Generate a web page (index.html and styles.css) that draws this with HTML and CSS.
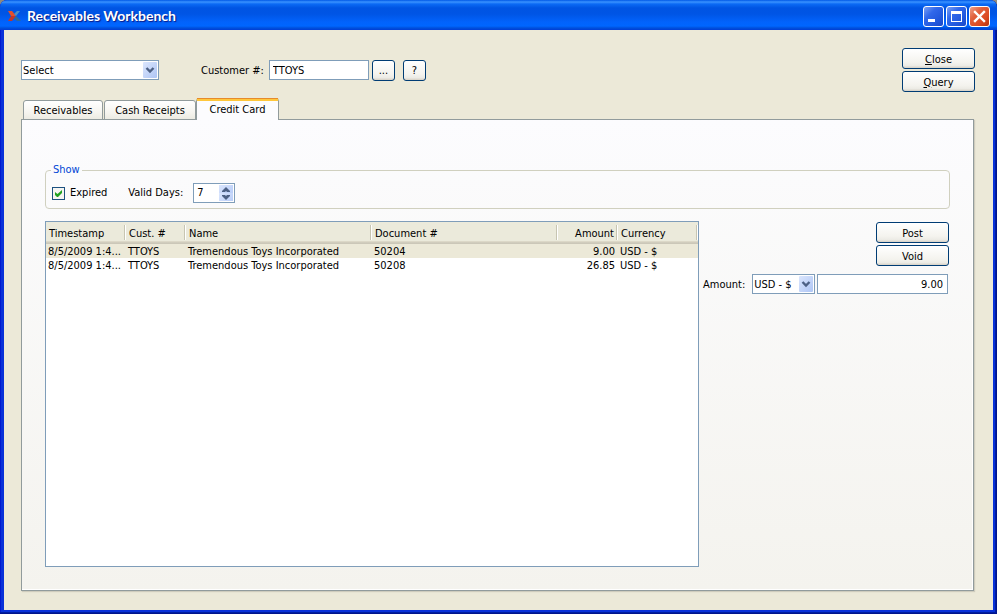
FILE: index.html
```
<!DOCTYPE html>
<html lang="en">
<head>
    <meta charset="UTF-8">
    <meta name="viewport" content="width=device-width, initial-scale=1.0">
    <title>Receivables Workbench</title>
    <link rel="stylesheet" href="styles.css">
</head>
<body>
    <div class="window">
        <header class="titlebar">
            <svg class="app-icon" width="13" height="10" viewBox="0 0 13 10">
                <path d="M0 0h4l4 5H3z" fill="#e2502c"/>
                <path d="M3 5h5l-4 5H0z" fill="#c0362c"/>
                <path d="M12 0H9L6 3l2 2z" fill="#4a90c4"/>
                <path d="M8 5L6 7l3 3h4z" fill="#2f6a96"/>
            </svg>
            <h1>Receivables Workbench</h1>
            <div class="window-buttons">
                <button type="button" class="win-btn" aria-label="Minimize">
                    <svg width="19" height="19" viewBox="0 0 19 19"><path d="M4 12h7v3H4z" fill="#fff"/></svg>
                </button>
                <button type="button" class="win-btn" aria-label="Maximize">
                    <svg width="19" height="19" viewBox="0 0 19 19"><path d="M4 4h11v11H4zM5 7v7h9V7z" fill="#fff" fill-rule="evenodd"/></svg>
                </button>
                <button type="button" class="win-btn win-close" aria-label="Close window">
                    <svg width="19" height="19" viewBox="0 0 19 19"><path d="M5 5l9 9M14 5l-9 9" stroke="#fff" stroke-width="2.4" stroke-linecap="square"/></svg>
                </button>
            </div>
        </header>

        <main class="client">
            <div class="toolbar">
                <form class="customer-form">
                    <select class="select customer-type" aria-label="Customer selection">
                        <option>Select</option>
                    </select>
                    <label for="customer">Customer #:</label>
                    <input type="text" class="field customer" id="customer" value="TTOYS">
                    <button type="button" class="btn btn-small">...</button>
                    <button type="button" class="btn btn-small btn-help">?</button>
                </form>
                <div class="button-stack">
                    <button type="button" class="btn"><u>C</u>lose</button>
                    <button type="button" class="btn"><u>Q</u>uery</button>
                </div>
            </div>

            <div class="tabs" role="tablist">
                <button type="button" class="tab tab-receivables" role="tab">Receivables</button>
                <button type="button" class="tab tab-receipts" role="tab">Cash Receipts</button>
                <button type="button" class="tab active" role="tab" aria-selected="true">Credit Card</button>
            </div>

            <section class="panel">
                <fieldset class="show-group">
                    <legend>Show</legend>
                    <input type="checkbox" class="check" id="expired" checked>
                    <label for="expired">Expired</label>
                    <label class="valid-label" for="validDays">Valid Days:</label>
                    <div class="spin">
                        <input type="number" id="validDays" value="7">
                        <div class="spin-buttons">
                            <button type="button" aria-label="More days">
                                <svg width="8" height="5" viewBox="0 0 8 5"><path d="M0 5V4l4-4 4 4v1H5L4 4 3 5z" fill="#4d6185"/></svg>
                            </button>
                            <button type="button" aria-label="Fewer days">
                                <svg width="8" height="5" viewBox="0 0 8 5"><path d="M0 0v1l4 4 4-4V0H5L4 1 3 0z" fill="#4d6185"/></svg>
                            </button>
                        </div>
                    </div>
                </fieldset>

                <div class="work">
                    <div class="list">
                        <table>
                            <thead>
                                <tr>
                                    <th class="col-time">Timestamp</th>
                                    <th class="col-cust">Cust. #</th>
                                    <th class="col-name">Name</th>
                                    <th class="col-doc">Document #</th>
                                    <th class="col-amount">Amount</th>
                                    <th>Currency</th>
                                </tr>
                            </thead>
                            <tbody>
                                <tr class="selected">
                                    <td>8/5/2009 1:4...</td>
                                    <td>TTOYS</td>
                                    <td>Tremendous Toys Incorporated</td>
                                    <td>50204</td>
                                    <td class="col-amount">9.00</td>
                                    <td>USD - $</td>
                                </tr>
                                <tr>
                                    <td>8/5/2009 1:4...</td>
                                    <td>TTOYS</td>
                                    <td>Tremendous Toys Incorporated</td>
                                    <td>50208</td>
                                    <td class="col-amount">26.85</td>
                                    <td>USD - $</td>
                                </tr>
                            </tbody>
                        </table>
                    </div>

                    <div class="side">
                        <div class="button-stack">
                            <button type="button" class="btn">Post</button>
                            <button type="button" class="btn">Void</button>
                        </div>
                        <div class="amount-row">
                            <label for="amount">Amount:</label>
                            <select class="select currency" aria-label="Currency">
                                <option>USD - $</option>
                            </select>
                            <input type="text" class="field amount" id="amount" value="9.00">
                        </div>
                    </div>
                </div>
            </section>
        </main>
    </div>
</body>
</html>
```

FILE: styles.css
```
:root {
    --face: #ece9d8;
    --field-border: #7f9db9;
    --tab-border: #919b9c;
    --button-border: #003c74;
}
* {
    box-sizing: border-box;
}
body {
    margin: 0;
    background: #8f8a7c;
    font-family: "DejaVu Sans Condensed", "DejaVu Sans", sans-serif;
    font-size: 11px;
    line-height: 14px;
    color: #000;
}
button, input, select {
    font: inherit;
    color: inherit;
    margin: 0;
}
.window {
    display: flex;
    flex-direction: column;
    min-height: 100vh;
    border-radius: 7px 7px 0 0;
    background: #0831d9;
    box-shadow: inset -1px -1px #00138c, inset -2px -2px #001ea0, inset 1px 0 #0019cf;
    overflow: hidden;
}

/* Title bar */
.titlebar {
    display: flex;
    align-items: center;
    height: 30px;
    padding: 2px 7px 0 8px;
    background: linear-gradient(#0058e6 0, #3a93ff 2px, #0b6af5 4px, #0054e3 8px, #0055e5 14px, #0263fc 22px, #0066ff 26px, #0050dc 28px, #003dd7 30px);
}
.app-icon {
    margin-right: 6px;
}
.titlebar h1 {
    flex: 1;
    margin: 0;
    font-family: Lato, "Open Sans", sans-serif;
    font-size: 14px;
    line-height: 18px;
    font-weight: 700;
    color: #fff;
    text-shadow: 1px 1px 1px #0a1883;
}
.window-buttons {
    display: flex;
    gap: 2px;
}
.win-btn {
    display: block;
    width: 21px;
    height: 21px;
    padding: 0;
    border: 1px solid #fff;
    border-radius: 3px;
    background: linear-gradient(135deg, #7ba0f4, #3168ea 35%, #2258dd 70%, #1b47c8);
}
.win-btn svg {
    display: block;
}
.win-close {
    background: linear-gradient(135deg, #f0a089, #e1603c 35%, #dc4a22 70%, #b8330e);
}

/* Client area */
.client {
    flex: 1;
    display: flex;
    flex-direction: column;
    margin: 0 4px 4px;
    padding: 18px 18px 19px 17px;
    background: var(--face);
}
.toolbar {
    display: flex;
    justify-content: space-between;
    align-items: center;
    height: 44px;
}
.customer-form {
    display: flex;
    align-items: center;
}
.customer-form label {
    margin: 0 5px 0 42px;
    padding-top: 1px;
}
.field {
    height: 20px;
    padding: 0 3px;
    border: 1px solid var(--field-border);
    background: #fff;
}
.customer {
    width: 100px;
    margin-right: 3px;
}
.select {
    appearance: none;
    height: 20px;
    padding: 2px 18px 0 1px;
    border: 1px solid var(--field-border);
    border-radius: 0;
    background: url("data:image/svg+xml,%3Csvg xmlns='http://www.w3.org/2000/svg' width='14' height='16'%3E%3ClinearGradient id='g' x2='1' y2='1'%3E%3Cstop stop-color='%23dbe6fd'/%3E%3Cstop offset='1' stop-color='%23aec5f5'/%3E%3C/linearGradient%3E%3Crect width='14' height='16' rx='1' fill='url(%23g)'/%3E%3Cpath d='M3.5 6l3.5 3.5L10.500 6' fill='none' stroke='%234d6185' stroke-width='2.4'/%3E%3C/svg%3E") no-repeat right 1px top 1px #fff;
}
.customer-type {
    width: 138px;
}
.btn {
    width: 73px;
    height: 21px;
    padding: 2px 0 0;
    border: 1px solid var(--button-border);
    border-radius: 3px;
    background: linear-gradient(#fff, #f4f3ee 70%, #ecebe5 88%, #d6d0c5);
}
.btn-small {
    width: 23px;
}
.btn-help {
    margin-left: 8px;
}
.button-stack {
    display: flex;
    flex-direction: column;
    gap: 2px;
}

/* Tabs */
.tabs {
    display: flex;
    align-items: flex-end;
    height: 28px;
    margin-bottom: -1px;
    padding-left: 2px;
}
.tab {
    height: 20px;
    padding: 2px 0 0;
    border: 1px solid var(--tab-border);
    border-radius: 3px 3px 0 0;
    background: linear-gradient(#fff, #f6f5f0 60%, #ecebe2);
}
.tab-receivables {
    width: 80px;
    margin-right: 1px;
}
.tab-receipts {
    width: 92px;
}
.tab.active {
    position: relative;
    width: 83px;
    height: 22px;
    padding: 0 0 2px;
    border-top: 3px solid #ffc73c;
    border-bottom: 0;
    background: #fcfcfe;
}
.tab.active::before {
    content: "";
    position: absolute;
    left: 0;
    right: 0;
    top: -3px;
    height: 1px;
    background: #e68b2c;
}

/* Tab page */
.panel {
    flex: 1;
    display: flex;
    flex-direction: column;
    margin-right: 1px;
    padding: 43px 23px 23px;
    border: 1px solid var(--tab-border);
    background: linear-gradient(#fcfcfe, #f4f3ee);
    box-shadow: 1px 1px 1px #cfccbd, inset -1px -1px #fff;
}
.show-group {
    display: flex;
    align-items: center;
    height: 46px;
    margin: 0 0 12px;
    padding: 0 6px;
    border: 1px solid #d0d0bf;
    border-radius: 4px;
    padding-top: 6px;
}
.show-group legend {
    padding: 0 2px;
    margin-left: -1px;
    color: #0046d5;
}
.check {
    appearance: none;
    width: 13px;
    height: 13px;
    margin-right: 5px;
    border: 1px solid #1c5180;
    background: #f5f5f2;
}
.check:checked {
    background: url("data:image/svg+xml,%3Csvg xmlns='http://www.w3.org/2000/svg' width='11' height='11'%3E%3Cpath d='M2 4v3l2 2h1l4-4V2L4.500 6z' fill='%2321a121'/%3E%3C/svg%3E") no-repeat #f5f5f2;
}
.valid-label {
    margin: 0 10px 0 21px;
}
.spin {
    display: flex;
    width: 42px;
    height: 20px;
    padding: 1px;
    border: 1px solid var(--field-border);
    background: #fff;
}
.spin input {
    appearance: textfield;
    flex: 1;
    min-width: 0;
    padding: 0 2px;
    border: 0;
    background: none;
}
.spin input::-webkit-inner-spin-button {
    display: none;
}
.spin-buttons {
    display: flex;
    flex-direction: column;
    width: 14px;
}
.spin-buttons button {
    flex: 1;
    display: flex;
    align-items: center;
    justify-content: center;
    padding: 0;
    border: 0;
    background: linear-gradient(135deg, #dbe6fd, #b9cdf8);
}

/* List and side column */
.work {
    flex: 1;
    display: flex;
    gap: 4px;
    padding-right: 1px;
}
.list {
    flex: 1;
    border: 1px solid var(--field-border);
    background: #fff;
}
table {
    width: 100%;
    table-layout: fixed;
    border-collapse: collapse;
}
thead tr {
    height: 22px;
    background: linear-gradient(#ebeadb 19px, #e2decd 19px, #d6d2c2 20px, #cbc7b8 21px);
}
th {
    padding: 2px 3px 0;
    font-weight: 400;
    text-align: left;
    background: linear-gradient(#c7c5b2, #c7c5b2) no-repeat right 1px top 3px / 1px 15px, linear-gradient(#fff, #fff) no-repeat right 0 top 3px / 1px 15px;
}
td {
    height: 14px;
    padding: 2px 2px 0;
    line-height: 12px;
    white-space: nowrap;
}
.selected {
    background: var(--face);
}
.col-time {
    width: 80px;
}
.col-cust {
    width: 60px;
}
.col-name,
.col-doc {
    width: 186px;
}
.col-amount {
    width: 60px;
    padding-right: 4px;
    text-align: right;
}
td.col-amount {
    padding-right: 3px;
}
.side {
    display: flex;
    flex-direction: column;
    align-items: flex-end;
    gap: 8px;
    width: 246px;
    padding-top: 1px;
}
.amount-row {
    display: flex;
    align-items: center;
    width: 100%;
    padding-right: 1px;
}
.amount-row label {
    padding-top: 1px;
}
.currency {
    width: 63px;
    margin: 0 2px 0 7px;
}
.amount {
    flex: 1;
    min-width: 0;
    padding-right: 4px;
    text-align: right;
}
```
